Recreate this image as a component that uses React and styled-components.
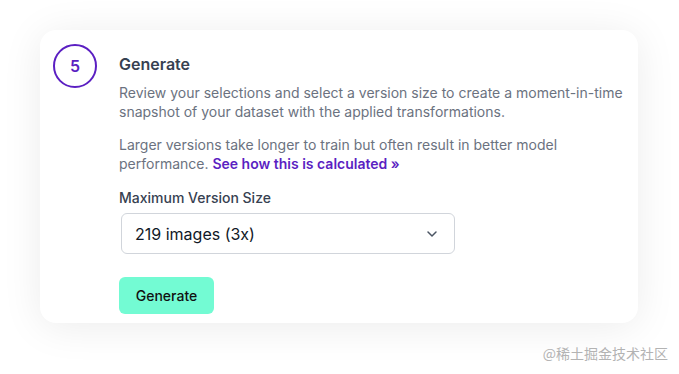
import React from "react";
import styled, { createGlobalStyle } from "styled-components";

const GlobalStyle = createGlobalStyle`
  html, body {
    margin: 0;
    background: #fff;
    font-family: Inter, "Noto Sans", sans-serif;
    -webkit-font-smoothing: antialiased;
  }
`;

const Page = styled.div`
  position: relative;
  width: 679px;
  height: 374px;
  padding: 30px 0 0 40px;
  box-sizing: border-box;
`;

const Card = styled.div`
  width: 598px;
  box-sizing: border-box;
  background: #fff;
  border-radius: 16px;
  box-shadow: 0 4px 40px rgba(0, 0, 0, 0.08);
  padding: 14px 13px 9px 13px;
  display: flex;
  gap: 22px;
`;

const Step = styled.div`
  flex: none;
  width: 44px;
  height: 44px;
  box-sizing: border-box;
  border: 2px solid #5b1fc2;
  border-radius: 50%;
  display: flex;
  align-items: center;
  justify-content: center;
  color: #5b1fc2;
  font-weight: 600;
  font-size: 16px;
`;

const Body = styled.div`
  flex: 1;
  padding-top: 9px;
`;

const Title = styled.h3`
  margin: 0 0 8px;
  font-size: 16px;
  line-height: 22px;
  font-weight: 600;
  color: #374151;
`;

const Text = styled.p`
  margin: 0 0 14px;
  font-size: 14px;
  line-height: 19px;
  color: #6b7280;
`;

const Link = styled.a`
  color: #5b1fc2;
  font-weight: 600;
  text-decoration: none;
`;

const Label = styled.div`
  font-size: 14px;
  line-height: 20px;
  font-weight: 500;
  color: #374151;
  margin-top: 15px;
`;

const Select = styled.div`
  margin: 5px 0 0 2px;
  width: 334px;
  height: 41px;
  box-sizing: border-box;
  border: 1px solid #d1d5db;
  border-radius: 6px;
  display: flex;
  align-items: center;
  justify-content: space-between;
  padding: 0 12px 0 13px;
  font-size: 16px;
  color: #111827;
`;

const Button = styled.button`
  margin-top: 23px;
  width: 95px;
  height: 37px;
  border: none;
  border-radius: 6px;
  background: #73fbd3;
  font-family: inherit;
  font-size: 14px;
  font-weight: 500;
  color: #111;
`;

const Watermark = styled.div`
  position: absolute;
  right: 11px;
  bottom: 11px;
  font-size: 14px;
  color: #b3b3b3;
  font-family: "Noto Sans CJK SC", sans-serif;
`;

export default function App() {
  return (
    <Page>
      <GlobalStyle />
      <Card>
        <Step>5</Step>
        <Body>
          <Title>Generate</Title>
          <Text>
            Review your selections and select a version size to create a
            moment-in-time snapshot of your dataset with the applied
            transformations.
          </Text>
          <Text>
            Larger versions take longer to train but often result in better
            model performance. <Link>See how this is calculated »</Link>
          </Text>
          <Label>Maximum Version Size</Label>
          <Select>
            <span>219 images (3x)</span>
            <svg width="20" height="20" viewBox="0 0 20 20" fill="none" stroke="#4b5563" strokeWidth="1.5" strokeLinecap="round" strokeLinejoin="round">
              <path d="M6 8l4 4 4-4" />
            </svg>
          </Select>
          <Button>Generate</Button>
        </Body>
      </Card>
      <Watermark>@稀土掘金技术社区</Watermark>
    </Page>
  );
}
